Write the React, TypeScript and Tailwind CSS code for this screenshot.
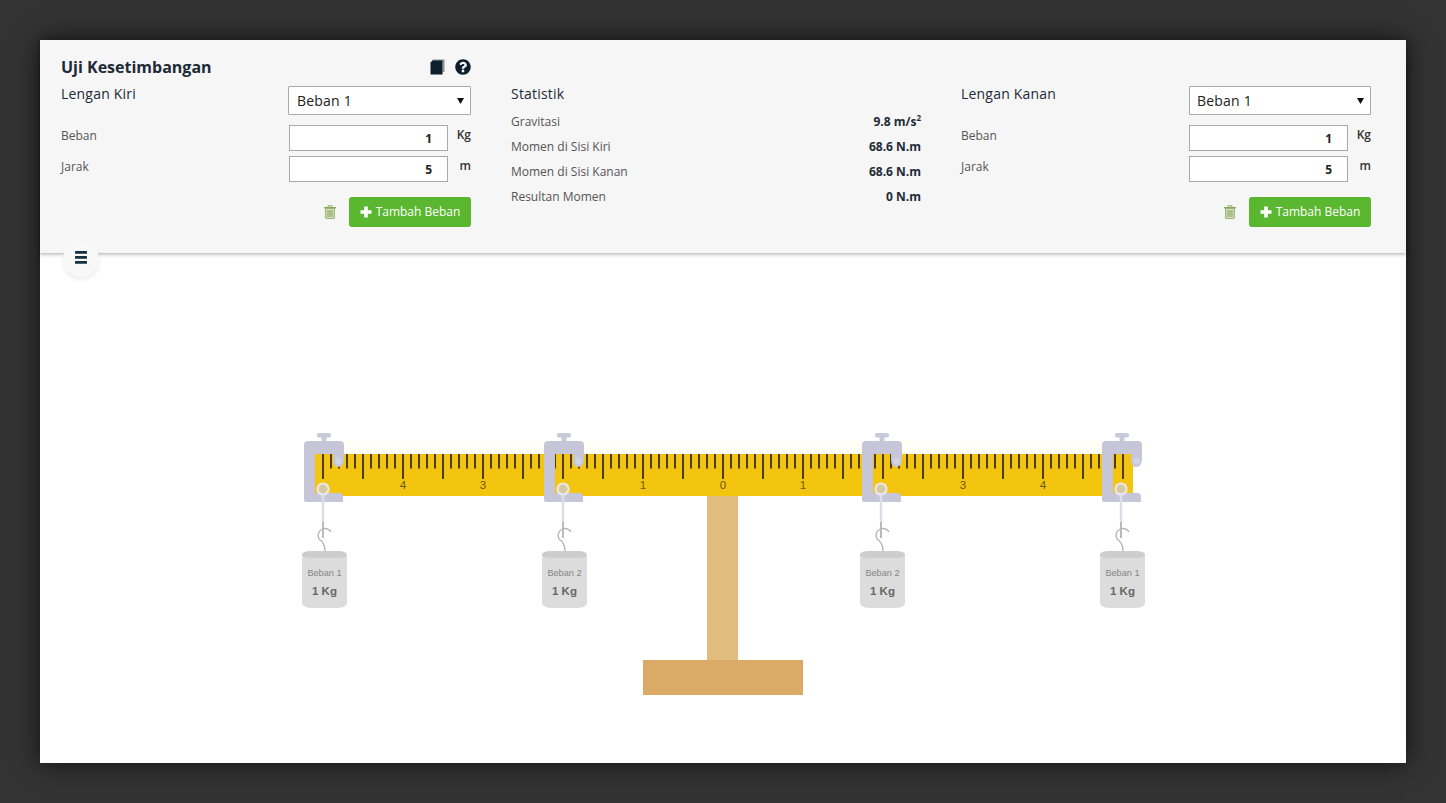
import React from "react";
import { FaQuestionCircle } from "react-icons/fa";

const dark = "text-[#1d2b36]";

function BookIcon() {
  return (
    <svg width="15" height="16" viewBox="0 0 15 16">
      <path d="M2.5 0.5 H14.5 V13 H12.5 V2.5 H2.5 Z" fill="#8a9299" />
      <path d="M2.5 1.5 H12.5 V15.5 H0.5 V3.5 Z" fill="#0d1f2d" />
    </svg>
  );
}

function TrashIcon() {
  return (
    <svg width="12" height="14" viewBox="0 0 12 14">
      <path d="M4 2 V0.8 H8 V2" fill="none" stroke="#8aaa5e" strokeWidth="1" />
      <rect x="0" y="2" width="12" height="1.4" fill="#8aaa5e" />
      <path d="M1.6 3.4 H10.4 V13 Q10.4 13.6 9.8 13.6 H2.2 Q1.6 13.6 1.6 13 Z" fill="#d5e0c0" stroke="#8aaa5e" strokeWidth="0.9" />
      <path d="M4 5 V12 M6 5 V12 M8 5 V12" stroke="#7e9f52" strokeWidth="1" />
    </svg>
  );
}

function PlusIcon() {
  return (
    <svg width="12" height="12" viewBox="0 0 12 12">
      <path d="M4.2 0.5 H7.8 V4.2 H11.5 V7.8 H7.8 V11.5 H4.2 V7.8 H0.5 V4.2 H4.2 Z" fill="#ffffff" />
    </svg>
  );
}

function BarsIcon() {
  return (
    <svg width="12" height="13" viewBox="0 0 12 13">
      <rect x="0" y="0" width="12" height="2.8" rx="0.6" fill="#12303f" />
      <rect x="0" y="5" width="12" height="2.8" rx="0.6" fill="#12303f" />
      <rect x="0" y="10" width="12" height="2.8" rx="0.6" fill="#12303f" />
    </svg>
  );
}

function Side({ title, selectClass, gap }: { title: string; selectClass: string; gap: string }) {
  return (
    <div className="w-[410px]">
      <div className="flex justify-between h-[38px]">
        <h3 className={`text-[14px] leading-[16px] mt-[-1px] font-medium ${dark} tracking-[0.2px]`}>{title}</h3>
        <div className={`${selectClass} h-[29px] mt-[-1px] bg-white border border-[#a9a9a9] flex items-center justify-between pr-[6px] rounded-[1px]`}>
          <span className="text-[14px] text-[#222] tracking-[0.2px]">Beban 1</span>
          <svg width="7" height="6" viewBox="0 0 7 6"><path d="M0 0H7L3.5 6Z" fill="#111" /></svg>
        </div>
      </div>
      <div className="flex items-start h-[31px]">
        <span className="text-[12px] leading-[16px] mt-[3px] text-[#555] w-[228px]">Beban</span>
        <input readOnly value="1" className="w-[159px] h-[26px] bg-white border border-[#a9a9a9] text-right pr-[15px] text-[12px] font-bold text-[#222] outline-none" />
        <span className="flex-1 text-right text-[12px] leading-[16px] mt-[2px] font-semibold text-[#333]">Kg</span>
      </div>
      <div className="flex items-start h-[41px]">
        <span className="text-[12px] leading-[16px] mt-[3px] text-[#555] w-[228px]">Jarak</span>
        <input readOnly value="5" className="w-[159px] h-[26px] bg-white border border-[#a9a9a9] text-right pr-[15px] text-[12px] font-bold text-[#222] outline-none" />
        <span className="flex-1 text-right text-[12px] leading-[16px] mt-[2px] font-semibold text-[#333]">m</span>
      </div>
      <div className={`flex justify-end items-center ${gap}`}>
        <TrashIcon />
        <button className="w-[122px] h-[30px] bg-[#5ab72f] rounded-[3px] text-white text-[12px] flex items-center justify-center gap-[4px]">
          <PlusIcon />
          <span>Tambah Beban</span>
        </button>
      </div>
    </div>
  );
}

function Stat({ label, children }: { label: string; children: React.ReactNode }) {
  return (
    <div className="flex justify-between items-center h-[25px]">
      <span className="text-[12px] text-[#555]">{label}</span>
      <span className={`text-[12px] font-bold ${dark}`}>{children}</span>
    </div>
  );
}

const ticks: number[] = [];
for (let x = 323; x <= 1123; x += 8) ticks.push(x);

function Clamp({ a, name }: { a: number; name: string }) {
  return (
    <g>
      <rect x={a - 6} y={433} width={14} height={4.5} rx={2} fill="#c9c9d9" />
      <rect x={a - 1.5} y={437} width={5} height={5} fill="#c9c9d9" />
      <path
        d={`M${a - 15} 441 H${a + 17} Q${a + 21} 441 ${a + 21} 445 V458 Q${a + 21} 467 ${a + 15} 467 Q${a + 10} 467 ${a + 10} 460 V454 H${a - 8} V493 H${a + 17} Q${a + 20} 493 ${a + 20} 497 V502 H${a - 17} Q${a - 19} 502 ${a - 19} 500 V445 Q${a - 19} 441 ${a - 15} 441 Z`}
        fill="#c6c6d8"
      />
      <circle cx={a + 15.5} cy={461} r={3.5} fill="#d0d3e4" />
      <circle cx={a} cy={489} r={4.5} fill="#c9cad6" fillOpacity={0.75} />
      <circle cx={a} cy={489} r={5.5} fill="none" stroke="#e8e8f2" strokeWidth={2.2} />
      <path d={`M${a} 495 V523`} stroke="#dddde9" strokeWidth={2.5} />
      <path d={`M${a} 522 V538`} stroke="#a9a9a9" strokeWidth={1.6} />
      <path d={`M${a + 8} 532 A6.7 6.7 0 1 0 ${a - 4} 539 Q${a + 2} 543 ${a + 2} 551`} fill="none" stroke="#b5b5b5" strokeWidth={1.4} />
      <path
        d={`M${a - 21} 555 Q${a - 21} 551 ${a - 10} 551 H${a + 13} Q${a + 24} 551 ${a + 24} 555 V603 Q${a + 24} 608 ${a + 12} 608 H${a - 9} Q${a - 21} 608 ${a - 21} 603 Z`}
        fill="#dcdcdc"
      />
      <path d={`M${a - 21} 555 Q${a - 21} 551 ${a - 10} 551 H${a + 13} Q${a + 24} 551 ${a + 24} 555 Q${a + 24} 558 ${a + 12} 558 H${a - 9} Q${a - 21} 558 ${a - 21} 555 Z`} fill="#cdcdcd" />
      <text x={a + 1.5} y={576} textAnchor="middle" fontSize={9.2} fontFamily="'Liberation Sans', sans-serif" fill="#858585">{name}</text>
      <text x={a + 1.5} y={595} textAnchor="middle" fontSize={11.5} fontWeight={700} fontFamily="'Liberation Sans', sans-serif" fill="#666666">1 Kg</text>
    </g>
  );
}

function Balance() {
  const labels: [number, string][] = [[403, "4"], [483, "3"], [643, "1"], [723, "0"], [803, "1"], [963, "3"], [1043, "4"]];
  return (
    <svg width="860" height="270" viewBox="293 430 860 270" className="block">
      <rect x={340} y={440} width={770} height={14} fill="#fffef7" />
      <rect x={707} y={496} width={31} height={164} fill="#e0bd7f" />
      <rect x={643} y={660} width={160} height={35} fill="#dcaa67" />
      <rect x={315} y={454} width={818} height={42} fill="#f4c50e" />
      {ticks.map((x) => {
        const long = (x - 323) % 40 === 0;
        return <rect key={x} x={x - 1} y={454} width={2} height={long ? 25 : 14.5} fill="#4d3a22" />;
      })}
      {labels.map(([x, t], i) => (
        <text key={i} x={x} y={489} textAnchor="middle" fontSize={11.5} fontFamily="'Liberation Sans', sans-serif" fill="#6a5520">{t}</text>
      ))}
      <Clamp a={323} name="Beban 1" />
      <Clamp a={563} name="Beban 2" />
      <Clamp a={881} name="Beban 2" />
      <Clamp a={1121} name="Beban 1" />
    </svg>
  );
}

export default function App() {
  return (
    <div className="h-[803px] bg-[#333333] p-10 overflow-hidden font-['Open_Sans',sans-serif]">
      <div className="relative h-[723px] bg-white shadow-[0_0_24px_rgba(0,0,0,0.7)]">
        <div className="relative h-[213px] bg-[#f6f6f6] pl-[21px] pt-[16px] shadow-[0_1px_4px_rgba(0,0,0,0.35)]">
          <div className="w-[410px] flex items-center justify-between h-[22px] mb-[9px]">
            <h1 className={`text-[16px] font-bold ${dark} leading-[22px]`}>Uji Kesetimbangan</h1>
            <div className="flex items-center gap-[10px]">
              <BookIcon />
              <FaQuestionCircle className="text-[#0d1f2d] text-[16px]" />
            </div>
          </div>
          <div className="flex gap-[40px]">
            <Side title="Lengan Kiri" selectClass="w-[183px] pl-2" gap="gap-[13px]" />
            <div className="w-[410px]">
              <h3 className={`text-[14px] leading-[16px] mt-[-1px] mb-[7px] font-medium ${dark} tracking-[0.2px]`}>Statistik</h3>
              <Stat label="Gravitasi">9.8 m/s<span className="relative top-[-5px] text-[8px] leading-none">2</span></Stat>
              <Stat label="Momen di Sisi Kiri">68.6 N.m</Stat>
              <Stat label="Momen di Sisi Kanan">68.6 N.m</Stat>
              <Stat label="Resultan Momen">0 N.m</Stat>
            </div>
            <Side title="Lengan Kanan" selectClass="w-[182px] pl-[7px]" gap="gap-[13px]" />
          </div>
        </div>
        <button className="absolute left-[23px] top-[201px] w-9 h-9 pb-[4px] rounded-full bg-[#f8f8f8] shadow-[0_3px_4px_rgba(0,0,0,0.07)] flex items-center justify-center">
          <BarsIcon />
        </button>
        <div className="flex justify-center pt-[177px]">
          <Balance />
        </div>
      </div>
    </div>
  );
}
